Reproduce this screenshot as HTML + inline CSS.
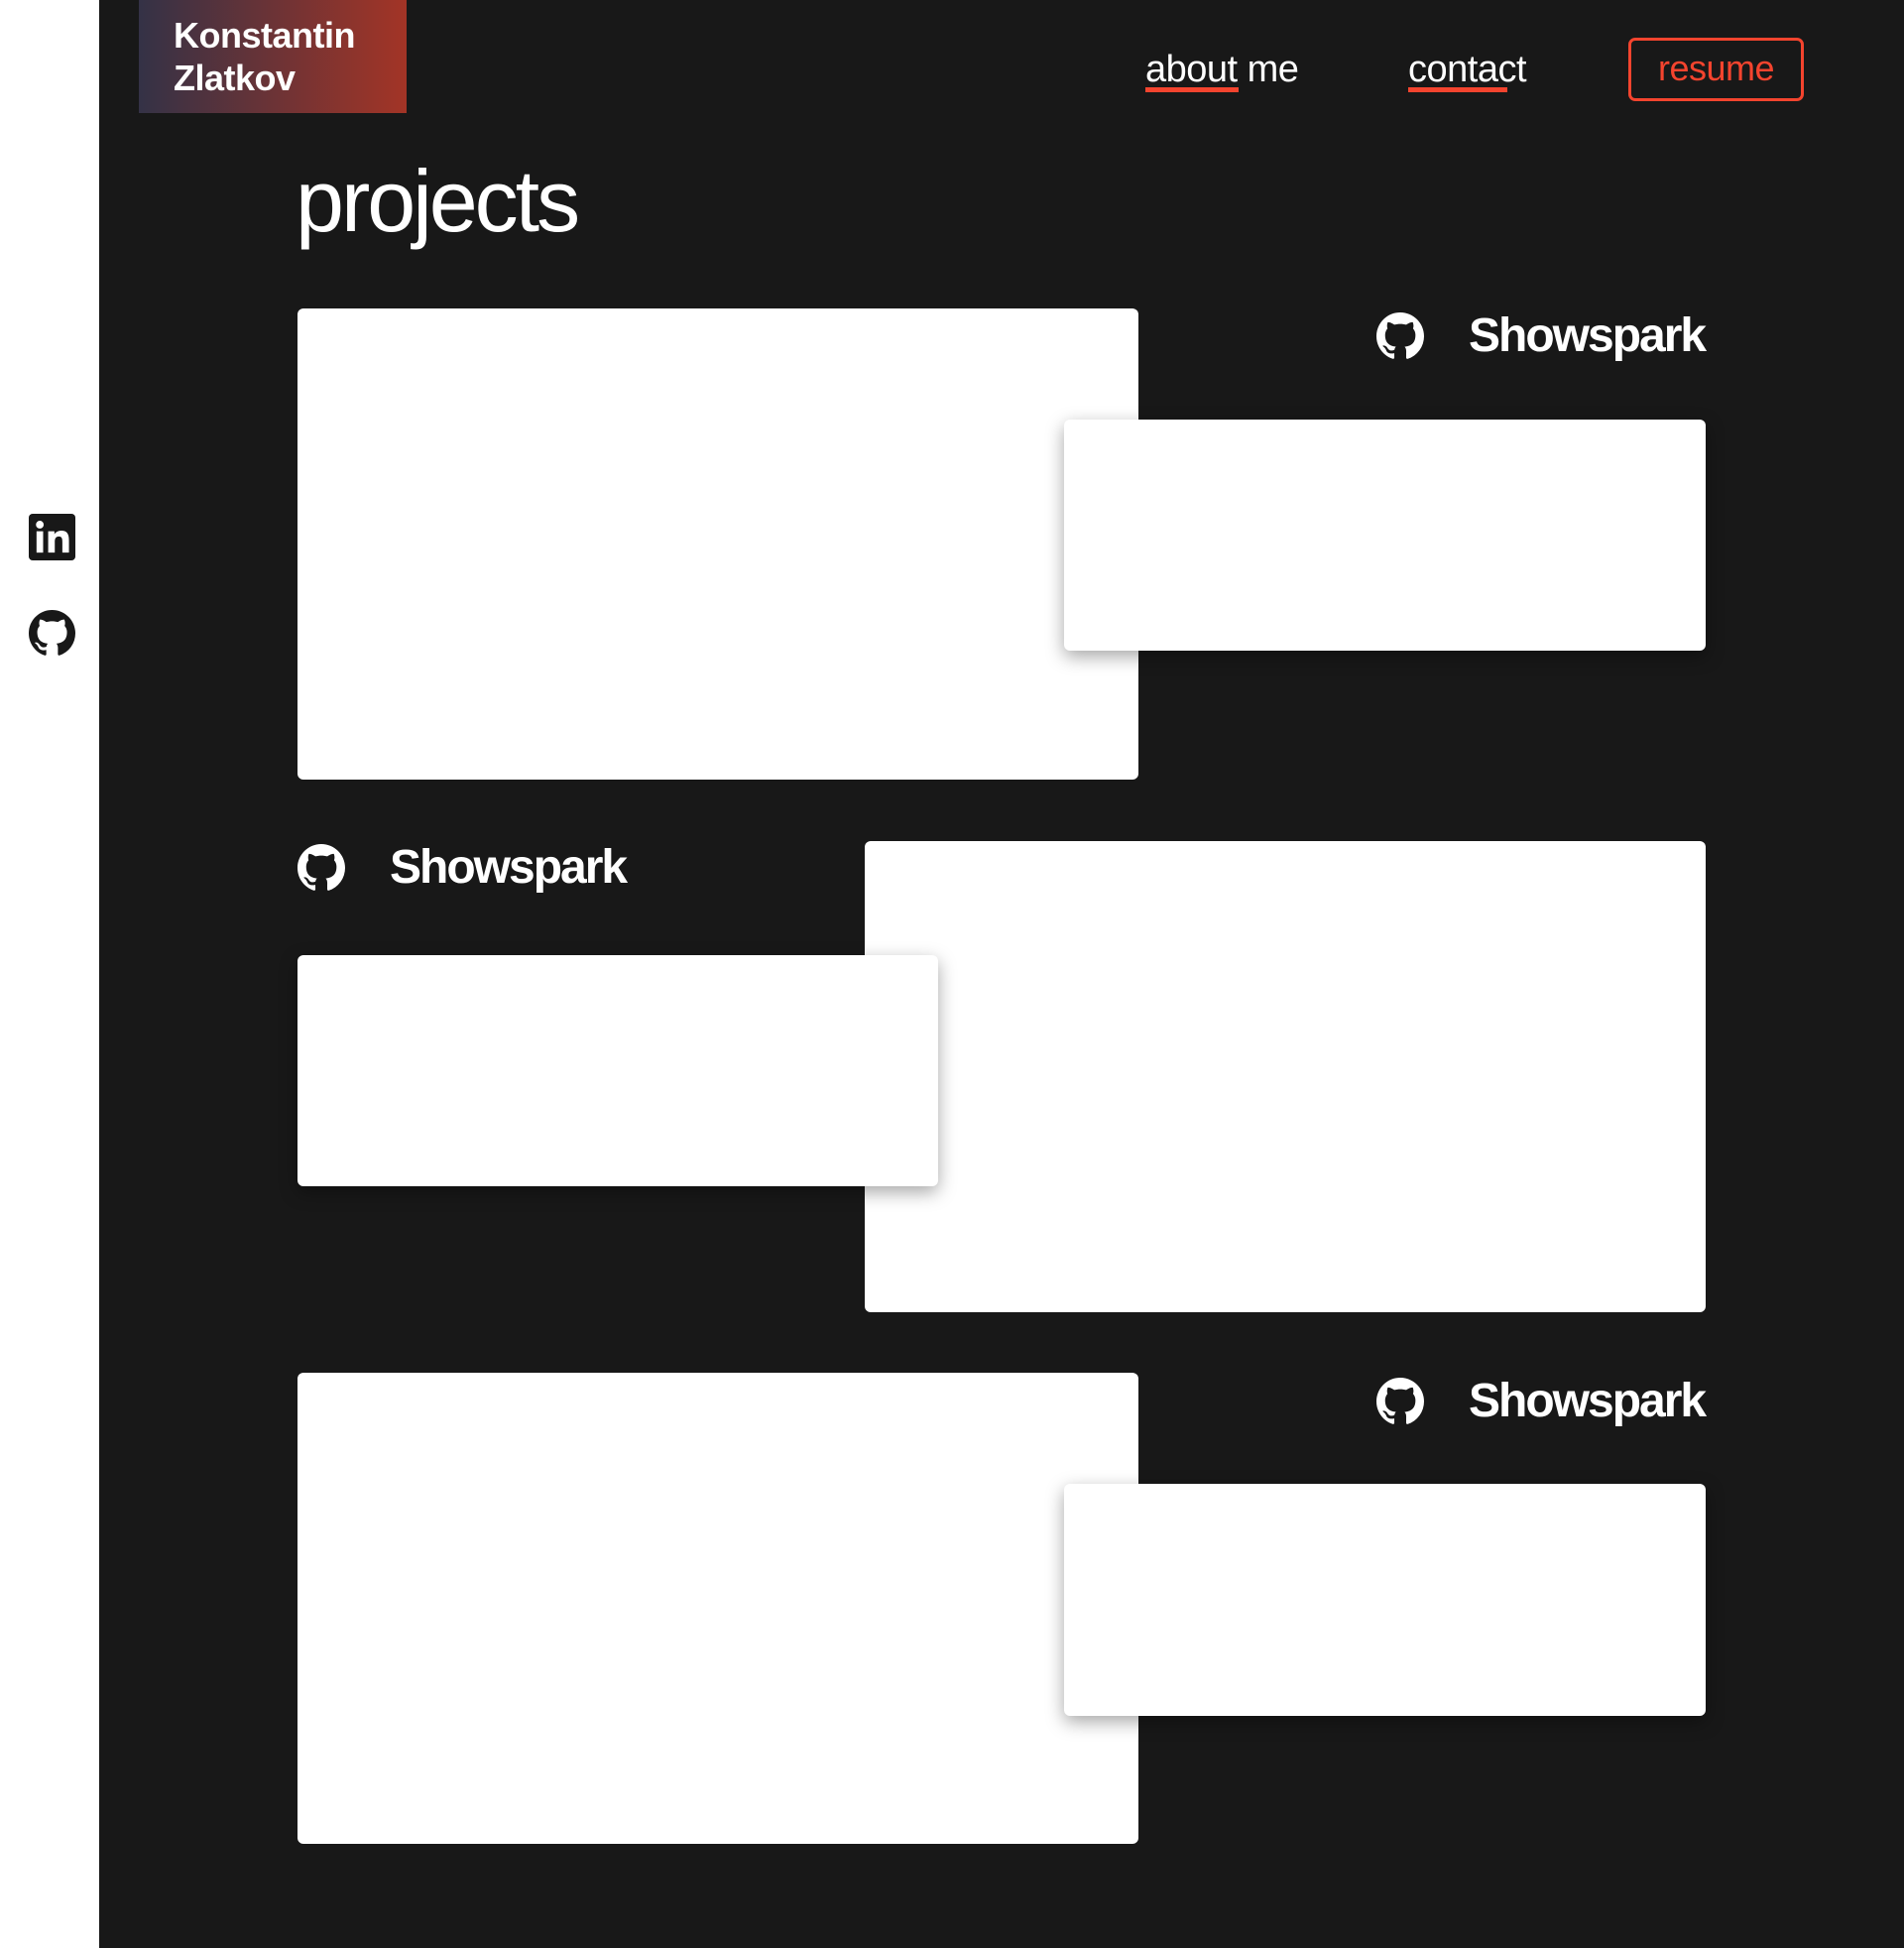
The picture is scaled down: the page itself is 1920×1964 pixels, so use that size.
<!DOCTYPE html>
<html><head><meta charset="utf-8"><style>
*{margin:0;padding:0;box-sizing:border-box}
body{width:1920px;height:1964px;background:#181818;font-family:"Liberation Sans",sans-serif;position:relative;overflow:hidden}
.side{position:absolute;left:0;top:0;width:100px;height:1964px;background:#fff}
.abs{position:absolute}
.logo{left:140px;top:0;width:270px;height:114px;background:linear-gradient(90deg,#343246,#a33426);color:#fff;font-weight:bold;font-size:36px;line-height:43px;padding:14px 0 0 35px;letter-spacing:-0.5px}
.nav{color:#fff;font-size:38px;letter-spacing:-0.5px}
.ul{height:5px;background:#f4442e}
.btn{left:1642px;top:38px;width:177px;height:64px;border:3px solid #f4442e;border-radius:7px;color:#f4442e;font-size:36px;text-align:center;line-height:56px;letter-spacing:-0.5px}
h1{position:absolute;left:298px;top:152px;color:#fff;font-size:88px;font-weight:normal;letter-spacing:-3px}
.card{position:absolute;background:#fff;border-radius:6px}
.sm{box-shadow:0 6px 18px rgba(0,0,0,.35)}
.t{position:absolute;color:#fff;font-size:48px;letter-spacing:-2px;line-height:56px;font-weight:600}
</style></head><body>
<div class="side"></div>
<svg class="abs" style="left:29px;top:518px" width="47" height="47" viewBox="0 0 24 24"><rect x="0" y="0" width="24" height="24" rx="2" fill="#181818"/><rect x="4" y="9" width="3.4" height="11" fill="#fff"/><circle cx="5.7" cy="5.6" r="2" fill="#fff"/><path d="M10 9h3.2v1.6c.5-.9 1.7-1.9 3.5-1.9 3.4 0 4 2.2 4 5.1V20h-3.4v-5.4c0-1.3 0-2.9-1.8-2.9s-2.1 1.4-2.1 2.8V20H10z" fill="#fff"/></svg>
<svg class="abs" style="left:29px;top:615px" width="47" height="47" viewBox="0 0 16 16"><path fill="#181818" d="M8 0C3.58 0 0 3.58 0 8c0 3.54 2.29 6.53 5.47 7.59.4.07.55-.17.55-.38 0-.19-.01-.82-.01-1.49-2.01.37-2.53-.49-2.69-.94-.09-.23-.48-.94-.82-1.13-.28-.15-.68-.52-.01-.53.63-.01 1.08.58 1.23.82.72 1.21 1.87.87 2.33.66.07-.52.28-.87.51-1.07-1.78-.2-3.64-.89-3.64-3.95 0-.87.31-1.59.82-2.15-.08-.2-.36-1.02.08-2.12 0 0 .67-.21 2.2.82.64-.18 1.32-.27 2-.27.68 0 1.36.09 2 .27 1.53-1.04 2.2-.82 2.2-.82.44 1.1.16 1.92.08 2.12.51.56.82 1.27.82 2.15 0 3.07-1.87 3.75-3.65 3.95.29.25.54.73.54 1.48 0 1.07-.01 1.93-.01 2.2 0 .21.15.46.55.38A8.013 8.013 0 0016 8c0-4.42-3.58-8-8-8z"/></svg>
<div class="abs logo">Konstantin<br>Zlatkov</div>
<div class="abs nav" style="left:1155px;top:49px">about me</div>
<div class="abs ul" style="left:1155px;top:88px;width:94px"></div>
<div class="abs nav" style="left:1420px;top:49px">contact</div>
<div class="abs ul" style="left:1420px;top:88px;width:100px"></div>
<div class="abs btn">resume</div>
<h1>projects</h1>

<div class="card" style="left:300px;top:311px;width:848px;height:475px"></div>
<div class="card sm" style="left:1073px;top:423px;width:647px;height:233px"></div>
<svg class="abs" style="left:1388px;top:315px" width="48" height="48" viewBox="0 0 16 16"><path fill="#fff" d="M8 0C3.58 0 0 3.58 0 8c0 3.54 2.29 6.53 5.47 7.59.4.07.55-.17.55-.38 0-.19-.01-.82-.01-1.49-2.01.37-2.53-.49-2.69-.94-.09-.23-.48-.94-.82-1.13-.28-.15-.68-.52-.01-.53.63-.01 1.08.58 1.23.82.72 1.21 1.87.87 2.33.66.07-.52.28-.87.51-1.07-1.78-.2-3.64-.89-3.64-3.95 0-.87.31-1.59.82-2.15-.08-.2-.36-1.02.08-2.12 0 0 .67-.21 2.2.82.64-.18 1.32-.27 2-.27.68 0 1.36.09 2 .27 1.53-1.04 2.2-.82 2.2-.82.44 1.1.16 1.92.08 2.12.51.56.82 1.27.82 2.15 0 3.07-1.87 3.75-3.65 3.95.29.25.54.73.54 1.48 0 1.07-.01 1.93-.01 2.2 0 .21.15.46.55.38A8.013 8.013 0 0016 8c0-4.42-3.58-8-8-8z"/></svg>
<div class="t" style="left:1481px;top:311px">Showspark</div>

<div class="card" style="left:872px;top:848px;width:848px;height:475px"></div>
<div class="card sm" style="left:300px;top:963px;width:646px;height:233px"></div>
<svg class="abs" style="left:300px;top:851px" width="48" height="48" viewBox="0 0 16 16"><path fill="#fff" d="M8 0C3.58 0 0 3.58 0 8c0 3.54 2.29 6.53 5.47 7.59.4.07.55-.17.55-.38 0-.19-.01-.82-.01-1.49-2.01.37-2.53-.49-2.69-.94-.09-.23-.48-.94-.82-1.13-.28-.15-.68-.52-.01-.53.63-.01 1.08.58 1.23.82.72 1.21 1.87.87 2.33.66.07-.52.28-.87.51-1.07-1.78-.2-3.64-.89-3.64-3.95 0-.87.31-1.59.82-2.15-.08-.2-.36-1.02.08-2.12 0 0 .67-.21 2.2.82.64-.18 1.32-.27 2-.27.68 0 1.36.09 2 .27 1.53-1.04 2.2-.82 2.2-.82.44 1.1.16 1.92.08 2.12.51.56.82 1.27.82 2.15 0 3.07-1.87 3.75-3.65 3.95.29.25.54.73.54 1.48 0 1.07-.01 1.93-.01 2.2 0 .21.15.46.55.38A8.013 8.013 0 0016 8c0-4.42-3.58-8-8-8z"/></svg>
<div class="t" style="left:393px;top:847px">Showspark</div>

<div class="card" style="left:300px;top:1384px;width:848px;height:475px"></div>
<div class="card sm" style="left:1073px;top:1496px;width:647px;height:234px"></div>
<svg class="abs" style="left:1388px;top:1389px" width="48" height="48" viewBox="0 0 16 16"><path fill="#fff" d="M8 0C3.58 0 0 3.58 0 8c0 3.54 2.29 6.53 5.47 7.59.4.07.55-.17.55-.38 0-.19-.01-.82-.01-1.49-2.01.37-2.53-.49-2.69-.94-.09-.23-.48-.94-.82-1.13-.28-.15-.68-.52-.01-.53.63-.01 1.08.58 1.23.82.72 1.21 1.87.87 2.33.66.07-.52.28-.87.51-1.07-1.78-.2-3.64-.89-3.64-3.95 0-.87.31-1.59.82-2.15-.08-.2-.36-1.02.08-2.12 0 0 .67-.21 2.2.82.64-.18 1.32-.27 2-.27.68 0 1.36.09 2 .27 1.53-1.04 2.2-.82 2.2-.82.44 1.1.16 1.92.08 2.12.51.56.82 1.27.82 2.15 0 3.07-1.87 3.75-3.65 3.95.29.25.54.73.54 1.48 0 1.07-.01 1.93-.01 2.2 0 .21.15.46.55.38A8.013 8.013 0 0016 8c0-4.42-3.58-8-8-8z"/></svg>
<div class="t" style="left:1481px;top:1385px">Showspark</div>
</body></html>
